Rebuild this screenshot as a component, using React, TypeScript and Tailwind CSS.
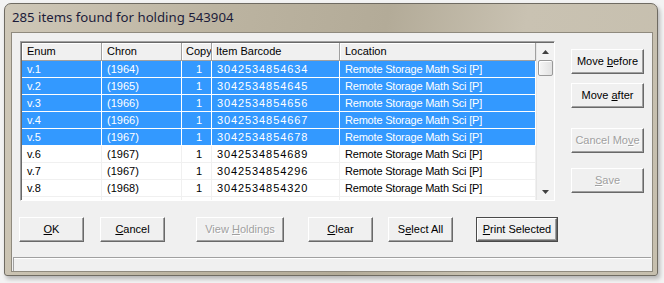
import React from "react";

type Row = { enumV: string; chron: string; copy: string; barcode: string; loc: string; sel: boolean };

const rows: Row[] = [
  { enumV: "v.1", chron: "(1964)", copy: "1", barcode: "3042534854634", loc: "Remote Storage Math Sci [P]", sel: true },
  { enumV: "v.2", chron: "(1965)", copy: "1", barcode: "3042534854645", loc: "Remote Storage Math Sci [P]", sel: true },
  { enumV: "v.3", chron: "(1966)", copy: "1", barcode: "3042534854656", loc: "Remote Storage Math Sci [P]", sel: true },
  { enumV: "v.4", chron: "(1966)", copy: "1", barcode: "3042534854667", loc: "Remote Storage Math Sci [P]", sel: true },
  { enumV: "v.5", chron: "(1967)", copy: "1", barcode: "3042534854678", loc: "Remote Storage Math Sci [P]", sel: true },
  { enumV: "v.6", chron: "(1967)", copy: "1", barcode: "3042534854689", loc: "Remote Storage Math Sci [P]", sel: false },
  { enumV: "v.7", chron: "(1967)", copy: "1", barcode: "3042534854296", loc: "Remote Storage Math Sci [P]", sel: false },
  { enumV: "v.8", chron: "(1968)", copy: "1", barcode: "3042534854320", loc: "Remote Storage Math Sci [P]", sel: false },
  { enumV: "v.9", chron: "(1968)", copy: "1", barcode: "3042534854331", loc: "Remote Storage Math Sci [P]", sel: false },
];

function Btn({
  children,
  w,
  disabled,
  def,
  className = "",
}: {
  children: React.ReactNode;
  w: string;
  disabled?: boolean;
  def?: boolean;
  className?: string;
}) {
  const face = (
    <div
      className={
        "h-full w-full flex items-center justify-center border-t border-l border-t-white border-l-white border-r border-b border-r-[#696969] border-b-[#696969] shadow-[inset_-1px_-1px_0_#a0a0a0] bg-[#f0f0f0] " +
        (disabled ? "text-[#a0a0a0] [text-shadow:1px_1px_0_#fff]" : "text-black")
      }
    >
      {children}
    </div>
  );
  return (
    <div className={`${w} h-[25px] shrink-0 ${def ? "border border-[#4a4a4a]" : ""} ${className}`}>
      {face}
    </div>
  );
}

function Cell({ w, children, sel, align = "left", className = "" }: { w: string; children: React.ReactNode; sel: boolean; align?: string; className?: string }) {
  return (
    <div
      className={`${w} shrink-0 h-full border-r ${sel ? "border-white" : "border-[#f0f0f0]"} pl-[5px] overflow-hidden whitespace-nowrap flex items-center ${
        align === "center" ? "justify-center pl-0" : ""
      } ${className}`}
    >
      {children}
    </div>
  );
}

function Scrollbar() {
  return (
    <div className="w-[18px] h-full bg-[#f2f2f2] flex flex-col border-l border-[#e6e6e6]">
      <div className="h-[17px] flex items-center justify-center">
        <svg width="7" height="4" viewBox="0 0 7 4">
          <path d="M3.5 0 L7 4 L0 4 Z" fill="#404040" />
        </svg>
      </div>
      <div className="mx-[1px] h-[16px] rounded-[2px] border border-[#9a9a9a] bg-[linear-gradient(to_right,#f6f6f6,#e2e2e2)] shadow-[inset_1px_1px_0_#fff]" />
      <div className="flex-1" />
      <div className="h-[17px] flex items-center justify-center">
        <svg width="7" height="4" viewBox="0 0 7 4">
          <path d="M0 0 L7 0 L3.5 4 Z" fill="#404040" />
        </svg>
      </div>
    </div>
  );
}

export default function App() {
  return (
    <div className="w-[664px] h-[283px] bg-[#f3f3f3] overflow-hidden pt-[3px] pl-[4px] [font-family:'Liberation_Sans',Arial,sans-serif] text-[11px]">
      <div className="w-[654px] h-[273px] rounded-t-[7px] rounded-b-[3px] border border-[#6f6b62] bg-[linear-gradient(100deg,#cfc8b8_0%,#bcb4a1_30%,#b3ab98_55%,#c9c2b2_75%,#c6bfae_100%)] shadow-[2px_3px_4px_rgba(0,0,0,0.25)] flex flex-col">
        <div className="h-[28px] flex items-center pl-[7px] text-[13.2px] text-[#1c1c3a] [font-family:'Noto_Sans',sans-serif]">
          285 items found for holding 543904
        </div>
        <div className="ml-[6px] w-[642px] h-[240px] border border-[#8f8a7e] bg-[#f0f0f0] flex flex-col">
          <div className="flex pt-[8px] pl-[8px]">
            {/* list */}
            <div className="w-[535px] h-[160px] border-t border-l border-[#a0a0a0] border-r border-b border-r-white border-b-white shadow-[inset_1px_1px_0_#696969] bg-white flex pl-[1px] pt-[1px]">
              <div className="flex-1 flex flex-col overflow-hidden">
                <div className="h-[18px] shrink-0 flex bg-[#f0f0f0] border-b border-[#a0a0a0] text-black">
                  <div className="w-[80px] shrink-0 border-r border-[#a0a0a0] pl-[5px] flex items-center shadow-[inset_1px_1px_0_#fff]">Enum</div>
                  <div className="w-[80px] shrink-0 border-r border-[#a0a0a0] pl-[5px] flex items-center shadow-[inset_1px_1px_0_#fff]">Chron</div>
                  <div className="w-[30px] shrink-0 border-r border-[#a0a0a0] pl-[4px] flex items-center shadow-[inset_1px_1px_0_#fff] overflow-hidden">Copy</div>
                  <div className="w-[128px] shrink-0 border-r border-[#a0a0a0] pl-[4px] flex items-center shadow-[inset_1px_1px_0_#fff]">Item Barcode</div>
                  <div className="flex-1 border-r border-[#a0a0a0] pl-[5px] flex items-center shadow-[inset_1px_1px_0_#fff]">Location</div>
                </div>
                {rows.map((r) => (
                  <div
                    key={r.enumV}
                    className={`h-[17px] shrink-0 flex border-b ${
                      r.sel ? "bg-[#3399ff] text-white border-white" : "bg-white text-black border-[#f0f0f0]"
                    }`}
                  >
                    <Cell w="w-[80px]" sel={r.sel}>{r.enumV}</Cell>
                    <Cell w="w-[80px]" sel={r.sel}>{r.chron}</Cell>
                    <Cell w="w-[30px]" sel={r.sel} align="center">{r.copy}</Cell>
                    <Cell w="w-[128px]" sel={r.sel} className="tracking-[0.9px] pl-[4px]">{r.barcode}</Cell>
                    <Cell w="flex-1" sel={r.sel} className="tracking-[-0.2px]">{r.loc}</Cell>
                  </div>
                ))}
              </div>
              <Scrollbar />
            </div>
            {/* right buttons */}
            <div className="ml-[16px] pt-[8px] flex flex-col">
              <Btn w="w-[73px]">
                Move&nbsp;<u>b</u>efore
              </Btn>
              <Btn w="w-[73px]" className="mt-[9px]">
                Move&nbsp;<u>a</u>fter
              </Btn>
              <Btn w="w-[73px]" className="mt-[20px]" disabled>
                Cancel Mo<u>v</u>e
              </Btn>
              <Btn w="w-[73px]" className="mt-[15px]" disabled>
                <u>S</u>ave
              </Btn>
            </div>
          </div>
          {/* bottom buttons */}
          <div className="flex pl-[7px] mt-[16px]">
            <Btn w="w-[65px]">
              <u>O</u>K
            </Btn>
            <Btn w="w-[65px]" className="ml-[16px]">
              <u>C</u>ancel
            </Btn>
            <Btn w="w-[88px]" className="ml-[31px]" disabled>
              View&nbsp;<u>H</u>oldings
            </Btn>
            <Btn w="w-[65px]" className="ml-[24px]">
              <u>C</u>lear
            </Btn>
            <Btn w="w-[65px]" className="ml-[15px]">
              S<u>e</u>lect All
            </Btn>
            <Btn w="w-[82px]" className="ml-[23px]" def>
              <u>P</u>rint Selected
            </Btn>
          </div>
          {/* status bar */}
          <div className="mt-[15px] mx-[1px] flex-1 border-t border-[#a0a0a0] shadow-[inset_1px_0_0_#a0a0a0,inset_0_1px_0_#fff]" />
        </div>
      </div>
    </div>
  );
}
